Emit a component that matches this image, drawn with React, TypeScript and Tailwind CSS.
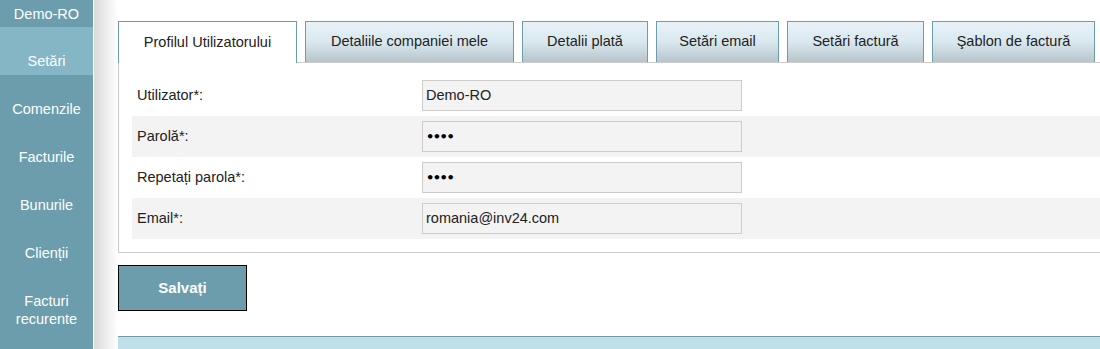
import React from "react";

const navItems = ["Comenzile", "Facturile", "Bunurile", "Clienții"];

const tabs = [
  { label: "Detaliile companiei mele", w: "w-[209px]" },
  { label: "Detalii plată", w: "w-[126px]" },
  { label: "Setări email", w: "w-[123px]" },
  { label: "Setări factură", w: "w-[137px]" },
  { label: "Şablon de factură", w: "w-[163px]" },
];

const rows = [
  { label: "Utilizator*:", value: "Demo-RO", bg: "bg-white" },
  { label: "Parolă*:", value: "••••", bg: "bg-[#f3f3f3]", dots: true },
  { label: "Repetați parola*:", value: "••••", bg: "bg-white", dots: true },
  { label: "Email*:", value: "romania@inv24.com", bg: "bg-[#f3f3f3]" },
];

const App = () => {
  return (
    <div className="flex w-[1100px] h-[349px] overflow-hidden bg-white font-['Liberation_Sans',Arial,sans-serif] text-[14.5px] text-[#222]">
      <aside className="w-[93px] shrink-0 bg-[#6b9dad] text-white flex flex-col items-center text-[14.5px] leading-[18px]">
        <div className="h-[27px] w-full flex items-center justify-center">Demo-RO</div>
        <div className="h-[48px] w-full bg-[#84b6c6] text-center pt-[25px]">Setări</div>
        {navItems.map((item) => (
          <div key={item} className="h-[48px] w-full text-center pt-[25px]">
            {item}
          </div>
        ))}
        <div className="w-full text-center pt-[25px]">
          Facturi
          <br />
          recurente
        </div>
      </aside>
      <div className="w-px bg-white shrink-0" />
      <div className="w-[24px] shrink-0 bg-gradient-to-r from-[#dadada] to-white" />
      <main className="flex-1 pt-[21px] min-w-0">
        <div className="flex items-start gap-[8px] h-[41px]">
          <div className="w-[179px] h-[42px] shrink-0 bg-white border border-[#6b9dad] border-b-0 flex items-center justify-center relative z-10">
            Profilul Utilizatorului
          </div>
          {tabs.map((t) => (
            <div
              key={t.label}
              className={`${t.w} h-[41px] shrink-0 border border-[#6b9dad] border-b-0 bg-gradient-to-b from-[#e8f3f8] via-[#d9e8ef] to-[#b7c5cb] flex items-center justify-center`}
            >
              {t.label}
            </div>
          ))}
        </div>
        <div className="border border-[#cccccc] border-r-0 h-[191px] pt-[12px] pl-[13px]">
          {rows.map((r) => (
            <div key={r.label} className={`${r.bg} h-[41px] flex items-center`}>
              <span className="w-[290px] pl-[5px] shrink-0">{r.label}</span>
              <div
                className={`w-[320px] h-[31px] border border-[#cccccc] bg-[#f3f3f3] flex items-center px-[3px] ${
                  r.dots ? "font-['DejaVu_Sans',sans-serif] text-[13px] font-bold tracking-[-1.5px] text-black" : ""
                }`}
              >
                {r.value}
              </div>
            </div>
          ))}
        </div>
        <button className="mt-[12px] w-[129px] h-[46px] bg-[#6b9dad] border border-black text-white font-bold text-[15px]">
          Salvați
        </button>
        <div className="mt-[25px] h-[20px] bg-[#c1dfe8] border-t border-[#6f9aa6]" />
      </main>
    </div>
  );
};

export default App;
